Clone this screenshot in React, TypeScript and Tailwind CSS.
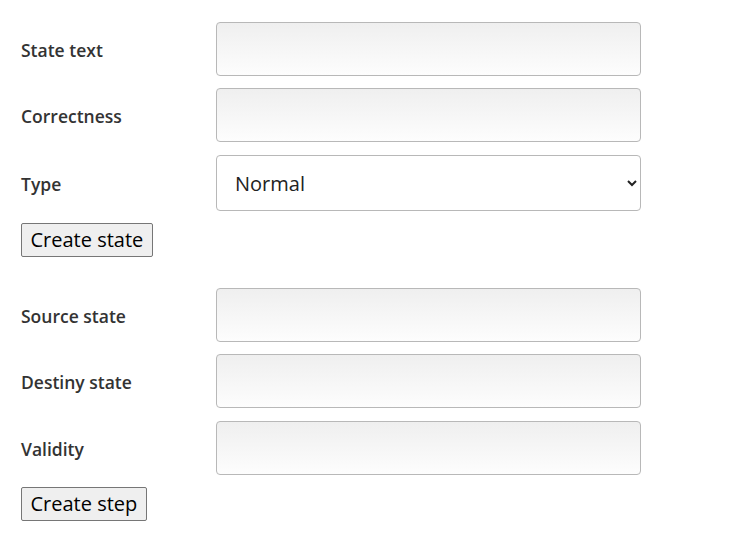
import React from "react";

const font = { fontFamily: '"Open Sans", sans-serif' };

function Row({ label, className, children }: { label: string; className?: string; children: React.ReactNode }) {
  return (
    <div className={"flex items-center " + (className ?? "")}>
      <label className="w-[195px] pt-[2px] text-[17.5px] font-semibold text-[#333]">{label}</label>
      {children}
    </div>
  );
}

function TextInput() {
  return (
    <input
      type="text"
      className="w-[425px] h-[54px] rounded-[4px] border border-[#b8b8b8] bg-gradient-to-b from-[#efefef] to-[#fdfdfd] px-3 text-[18px] outline-none"
    />
  );
}

function Btn({ className, children }: { className?: string; children: React.ReactNode }) {
  return (
    <div className={className}>
      <button className="h-[34px] px-[8.5px] rounded-[2px] border border-[#767676] bg-[#efefef] text-[20px] leading-none text-black">
        {children}
      </button>
    </div>
  );
}

export default function App() {
  return (
    <div style={font} className="bg-white min-h-[550px] w-[752px] pl-[21px] pt-[22px]">
      <div className="flex flex-col">
        <Row label="State text">
          <TextInput />
        </Row>
        <Row label="Correctness" className="mt-[12px]">
          <TextInput />
        </Row>
        <Row label="Type" className="mt-[13px]">
          <select
            defaultValue="Normal"
            className="w-[425px] h-[56px] rounded-[4px] border border-[#b8b8b8] bg-white pl-[14px] pr-2 text-[20px] text-[#222] outline-none"
          >
            <option>Normal</option>
            <option>Initial</option>
            <option>Final</option>
          </select>
        </Row>
        <Btn className="mt-[12px]">Create state</Btn>
      </div>
      <div className="flex flex-col mt-[31px]">
        <Row label="Source state">
          <TextInput />
        </Row>
        <Row label="Destiny state" className="mt-[12px]">
          <TextInput />
        </Row>
        <Row label="Validity" className="mt-[13px]">
          <TextInput />
        </Row>
        <Btn className="mt-[12px]">Create step</Btn>
      </div>
    </div>
  );
}
